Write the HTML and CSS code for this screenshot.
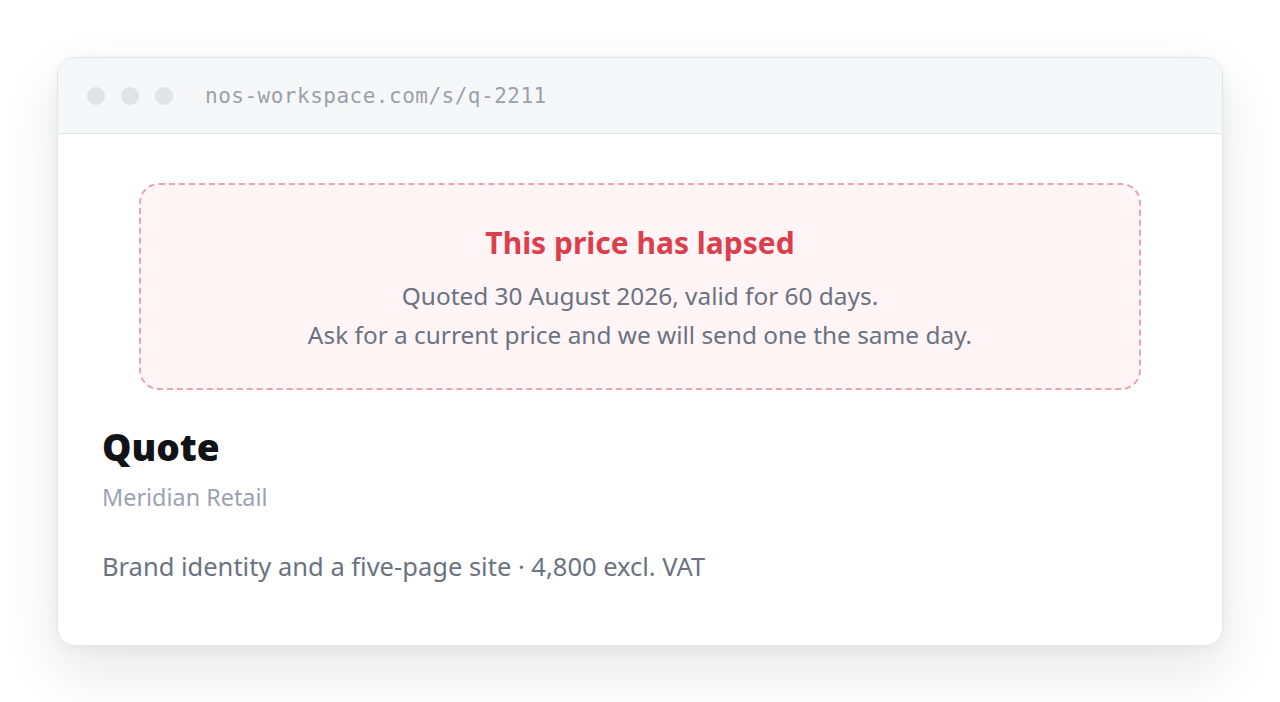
FILE: index.html
```html
<!DOCTYPE html>
<html lang="en">
<head>
<meta charset="utf-8">
<title>Quote</title>
<link rel="stylesheet" href="styles.css">
</head>
<body>
<div class="window">
  <div class="titlebar">
    <div class="dots"><span class="dot"></span><span class="dot"></span><span class="dot"></span></div>
    <div class="url">nos-workspace.com/s/q-2211</div>
  </div>
  <div class="content">
    <div class="lapsed">
      <h2 class="lapsed-title">This price has lapsed</h2>
      <p class="lapsed-text">Quoted 30 August 2026, valid for 60 days.</p>
      <p class="lapsed-text">Ask for a current price and we will send one the same day.</p>
    </div>
    <h1 class="quote-title">Quote</h1>
    <div class="client">Meridian Retail</div>
    <p class="summary">Brand identity and a five-page site · 4,800 excl. VAT</p>
  </div>
</div>
</body>
</html>
```

FILE: styles.css
```css
* { box-sizing: border-box; }
html, body { margin: 0; background: #ffffff; }
body {
  padding: 57px 57px;
  font-family: "Noto Sans", "Open Sans", sans-serif;
}
.window {
  border: 1px solid #e3e5e8;
  border-radius: 18px;
  background: #ffffff;
  overflow: hidden;
  box-shadow: 0 24px 60px rgba(17, 24, 39, 0.10), 0 4px 14px rgba(17, 24, 39, 0.04);
}
.titlebar {
  height: 76px;
  background: #f6f7f9;
  border-bottom: 1px solid #e3e5e8;
  display: flex;
  align-items: center;
  padding: 0 29px;
}
.dots { display: flex; gap: 16px; }
.dot { width: 18px; height: 18px; border-radius: 50%; background: #e1e3e7; }
.url {
  margin-left: 32px;
  font-family: "DejaVu Sans Mono", "Liberation Mono", monospace;
  font-size: 21px;
  color: #9ba1aa;
  letter-spacing: 0.5px;
}
.content { padding: 49px 44px 61px; }
.lapsed {
  margin: 0 37px;
  border: 2px dashed #eba5ad;
  border-radius: 20px;
  background: #fff5f6;
  text-align: center;
  padding: 36px 24px 34px;
}
.lapsed-title {
  margin: 0 0 11px;
  font-size: 30px;
  font-weight: 700;
  color: #dc3f4b;
  line-height: 44px;
}
.lapsed-text {
  margin: 0;
  font-size: 24.4px;
  line-height: 39px;
  color: #6b7280;
}
.quote-title {
  margin: 32px 0 0;
  font-size: 37px;
  font-weight: 900;
  color: #111317;
  line-height: 50px;
}
.client {
  margin-top: 8px;
  font-size: 23.4px;
  color: #9ca3af;
  line-height: 34px;
}
.summary {
  margin: 34px 0 0;
  font-size: 25.5px;
  color: #6b7280;
  line-height: 36px;
}
```
